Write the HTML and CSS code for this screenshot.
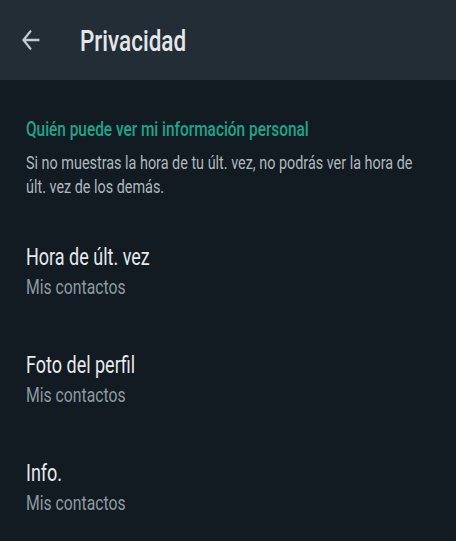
FILE: index.html
```html
<!DOCTYPE html>
<html>
<head>
    <title>Privacidad</title>
    <link rel="stylesheet" href="styles.css">
</head>
<body>

    <header class="topbar">
        <svg class="back-icon" width="18" height="22" viewBox="4 4 16 16" preserveAspectRatio="none">
            <path d="M19.5 12H5.5 M12 5.2L5.2 12L12 18.8" fill="none" stroke="#c3cbd0" stroke-width="1.8"/>
        </svg>
        <h1 class="topbar-title tall">Privacidad</h1>
    </header>

    <main class="content">
        <h2 class="section-title tall">Quién puede ver mi información personal</h2>
        <p class="section-desc">Si no muestras la hora de tu últ. vez, no podrás ver la hora de últ. vez de los demás.</p>

        <div class="setting">
            <div class="setting-name tall">Hora de últ. vez</div>
            <div class="setting-value tall">Mis contactos</div>
        </div>

        <div class="setting">
            <div class="setting-name tall">Foto del perfil</div>
            <div class="setting-value tall">Mis contactos</div>
        </div>

        <div class="setting">
            <div class="setting-name tall">Info.</div>
            <div class="setting-value tall">Mis contactos</div>
        </div>
    </main>

</body>
</html>
```

FILE: styles.css
```css
body {
    font-family: Roboto, "Noto Sans", sans-serif;
    margin: 0;
    padding: 0;
    background-color: #121b22;
    overflow: hidden;
}

/* the text in the shot is tall and narrow: small font, stretched up */
.tall {
    transform: scaleY(1.3333);
    transform-origin: center;
    white-space: nowrap;
}

.topbar {
    height: 80px;
    display: flex;
    align-items: center;
    padding-left: 22px;
    gap: 40px;
    background-color: #232d36;
}

.back-icon {
    display: block;
    flex-shrink: 0;
}

.topbar-title {
    margin: 0;
    font-size: 22.5px;
    font-weight: 500;
    color: #e3e7ea;
    line-height: 30px;
}

.content {
    display: block;
    padding: 37px 26px 0 26px;
}

.section-title {
    margin: 0;
    font-size: 15.4px;
    font-weight: 500;
    line-height: 24px;
    color: #1fa58a;
}

/* two lines, so stretch from the top and add back the lost height */
.section-desc {
    margin: 11px 0 31px 0;
    font-size: 14.4px;
    line-height: 17.5px;
    color: #afb9bf;
    transform: scaleY(1.3333);
    transform-origin: top;
}

.setting {
    padding: 24px 0;
}

.setting-name {
    font-size: 18px;
    line-height: 30px;
    color: #e6eaec;
}

.setting-value {
    font-size: 15.75px;
    line-height: 30px;
    color: #8d9aa2;
}
```
